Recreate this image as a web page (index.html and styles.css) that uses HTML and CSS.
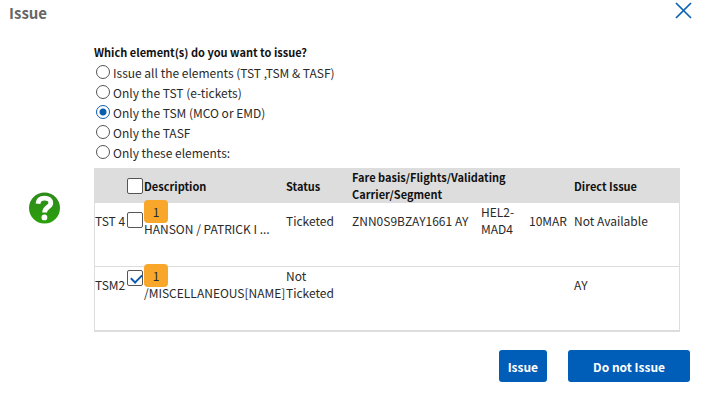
FILE: index.html
```html
<!DOCTYPE html>
<html lang="en">
<head>
    <meta charset="utf-8">
    <title>Issue</title>
    <link rel="stylesheet" href="styles.css">
</head>

<body>
    <div class="dialog" role="dialog" aria-labelledby="dialogTitle">

        <div class="dialog-header">
            <h1 id="dialogTitle">Issue</h1>
            <button type="button" class="close" aria-label="Close">
                <svg width="17" height="17" viewBox="0 0 17 17">
                    <path d="M1 1L16 16M16 1L1 16" stroke="#0b62b4" stroke-width="1.7" fill="none"/>
                </svg>
            </button>
        </div>

        <form id="issueForm">
            <div class="dialog-body">
                <div class="help-icon">
                    <svg width="32" height="32" viewBox="0 0 32 32">
                        <defs>
                            <linearGradient id="green" x1="0" y1="0" x2="0" y2="1">
                                <stop offset="0" stop-color="#2f8a1c"/>
                                <stop offset="1" stop-color="#2ba00c"/>
                            </linearGradient>
                        </defs>
                        <circle cx="16.5" cy="16" r="15.5" fill="url(#green)"/>
                        <path d="M10 11.8C10.3 8 13 6.2 16.6 6.2C20.4 6.2 22.8 8 22.8 11C22.8 15.4 16.6 14.8 16.6 20.6" fill="none" stroke="#fff" stroke-width="4.8"/>
                        <circle cx="16.4" cy="25.4" r="2.9" fill="#fff"/>
                    </svg>
                </div>

                <div class="content">
                    <fieldset class="options">
                        <legend>Which element(s) do you want to issue?</legend>
                        <div class="option">
                            <input type="radio" name="elements" id="optAll">
                            <label for="optAll">Issue all the elements (TST ,TSM &amp; TASF)</label>
                        </div>
                        <div class="option">
                            <input type="radio" name="elements" id="optTst">
                            <label for="optTst">Only the TST (e-tickets)</label>
                        </div>
                        <div class="option">
                            <input type="radio" name="elements" id="optTsm" checked>
                            <label for="optTsm">Only the TSM (MCO or EMD)</label>
                        </div>
                        <div class="option">
                            <input type="radio" name="elements" id="optTasf">
                            <label for="optTasf">Only the TASF</label>
                        </div>
                        <div class="option">
                            <input type="radio" name="elements" id="optThese">
                            <label for="optThese">Only these elements:</label>
                        </div>
                    </fieldset>

                    <table class="elements">
                        <colgroup>
                            <col class="col-name">
                            <col class="col-check">
                            <col class="col-description">
                            <col class="col-status">
                            <col class="col-fare">
                            <col class="col-carrier">
                            <col class="col-segment">
                            <col class="col-date">
                            <col>
                        </colgroup>
                        <thead>
                            <tr>
                                <th></th>
                                <th><input type="checkbox" id="selectAll" aria-label="Select all elements"></th>
                                <th>Description</th>
                                <th>Status</th>
                                <th colspan="4">Fare basis/Flights/Validating<br>Carrier/Segment</th>
                                <th>Direct Issue</th>
                            </tr>
                        </thead>
                        <tbody>
                            <tr>
                                <td><label for="tst4">TST 4</label></td>
                                <td><input type="checkbox" id="tst4"></td>
                                <td><span class="badge">1</span><div>HANSON / PATRICK I ...</div></td>
                                <td>Ticketed</td>
                                <td>ZNN0S9BZAY1661</td>
                                <td>AY</td>
                                <td>HEL2-<br>MAD4</td>
                                <td>10MAR</td>
                                <td>Not Available</td>
                            </tr>
                            <tr>
                                <td><label for="tsm2">TSM2</label></td>
                                <td class="top"><input type="checkbox" id="tsm2" checked></td>
                                <td><span class="badge">1</span><div>/MISCELLANEOUS[NAME]</div></td>
                                <td>Not<br>Ticketed</td>
                                <td></td>
                                <td></td>
                                <td></td>
                                <td></td>
                                <td>AY</td>
                            </tr>
                        </tbody>
                    </table>
                </div>
            </div>

            <div class="buttons">
                <button type="submit" class="btn">Issue</button>
                <button type="button" class="btn btn-wide">Do not Issue</button>
            </div>
        </form>

    </div>
</body>
</html>
```
FILE: styles.css
```css
* {
    box-sizing: border-box;
}

body {
    margin: 0;
    background: #fff;
    color: #2a2a2a;
    font-family: "Noto Sans CJK SC", "Noto Sans", sans-serif;
    font-size: 12px;
    line-height: 17px;
}

.dialog-header {
    display: flex;
    justify-content: space-between;
    align-items: flex-start;
    padding: 2px 10px 0 9px;
}

.dialog-header h1 {
    margin: 0;
    font-size: 15px;
    font-weight: bold;
    line-height: 22px;
    color: #666;
}

.close {
    display: block;
    padding: 0;
    border: 0;
    background: none;
    line-height: 0;
}

.dialog-body {
    display: flex;
    padding: 20px 22px 0 0;
}

.help-icon {
    flex: 0 0 94px;
    align-self: center;
    padding: 40px 0 0 28px;
}

.help-icon svg {
    display: block;
}

.content {
    flex: 1;
    min-width: 0;
}

.options {
    margin: 0;
    padding: 0;
    border: 0;
}

.options legend {
    margin-bottom: 1px;
    padding: 0;
    font-size: 11px;
    font-weight: bold;
    color: #111;
}

.option {
    display: flex;
    align-items: center;
    gap: 3px;
    height: 20px;
    margin-left: 2px;
}

input {
    appearance: none;
    display: block;
    margin: 0;
    border: 1px solid #555;
    background: #fff;
}

input[type="radio"] {
    width: 14px;
    height: 14px;
    border-radius: 50%;
}

input[type="radio"]:checked {
    border-color: #0b5cad;
    background: radial-gradient(circle, #0b5cad 3px, #fff 4px);
}

input[type="checkbox"] {
    position: relative;
    width: 16px;
    height: 16px;
    border-radius: 2px;
}

input[type="checkbox"]:checked::after {
    content: "";
    position: absolute;
    left: 5px;
    top: 1px;
    width: 5px;
    height: 9px;
    border: solid #0b5cad;
    border-width: 0 2px 2px 0;
    transform: rotate(45deg);
}

.elements {
    width: 100%;
    margin-top: 6px;
    border: 1px solid #ddd;
    border-bottom-width: 2px;
    border-spacing: 0;
    table-layout: fixed;
}

.col-name { width: 32px; }
.col-check { width: 17px; }
.col-description { width: 142px; }
.col-status { width: 66px; }
.col-fare { width: 103px; }
.col-carrier { width: 26px; }
.col-segment { width: 48px; }
.col-date { width: 45px; }

.elements th {
    padding: 0;
    background: #ddd;
    font-size: 11px;
    font-weight: bold;
    text-align: left;
    color: #111;
}

.elements td {
    padding: 0 0 29px;
    white-space: nowrap;
}

.elements tr + tr td {
    border-top: 1px solid #ddd;
}

.elements .top {
    padding-top: 3px;
    vertical-align: top;
}

/* the badge is taller than its line and overlaps the row above */
.badge {
    display: block;
    width: 24px;
    height: 23px;
    margin: -3px 0;
    border-radius: 4px;
    background: #f9a72b;
    line-height: 23px;
    text-align: center;
}

.buttons {
    display: flex;
    justify-content: flex-end;
    gap: 21px;
    padding: 18px 12px 28px 0;
}

.btn {
    height: 32px;
    padding: 0 9px;
    border: 0;
    border-radius: 3px;
    background: #005eb8;
    color: #fff;
    font-family: inherit;
    font-size: 12px;
    font-weight: bold;
}

.btn-wide {
    padding: 0 25px;
}
```
